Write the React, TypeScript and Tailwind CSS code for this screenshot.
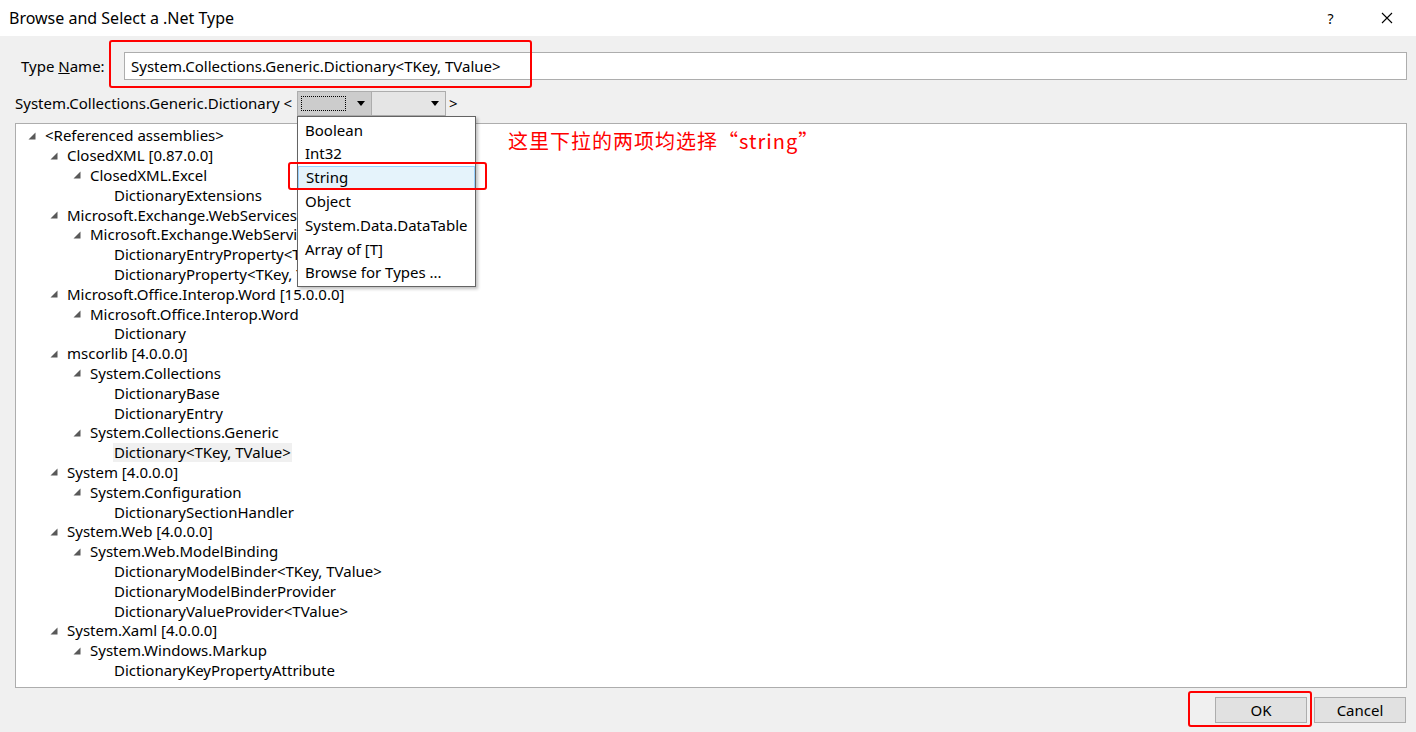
import React from 'react';

type Node = { label: string; level: number; expander?: boolean; selected?: boolean };

const tree: Node[] = [
  { label: '<Referenced assemblies>', level: 0, expander: true },
  { label: 'ClosedXML [0.87.0.0]', level: 1, expander: true },
  { label: 'ClosedXML.Excel', level: 2, expander: true },
  { label: 'DictionaryExtensions', level: 3 },
  { label: 'Microsoft.Exchange.WebServices', level: 1, expander: true },
  { label: 'Microsoft.Exchange.WebServices.Data', level: 2, expander: true },
  { label: 'DictionaryEntryProperty<TKey>', level: 3 },
  { label: 'DictionaryProperty<TKey, TEntry>', level: 3 },
  { label: 'Microsoft.Office.Interop.Word [15.0.0.0]', level: 1, expander: true },
  { label: 'Microsoft.Office.Interop.Word', level: 2, expander: true },
  { label: 'Dictionary', level: 3 },
  { label: 'mscorlib [4.0.0.0]', level: 1, expander: true },
  { label: 'System.Collections', level: 2, expander: true },
  { label: 'DictionaryBase', level: 3 },
  { label: 'DictionaryEntry', level: 3 },
  { label: 'System.Collections.Generic', level: 2, expander: true },
  { label: 'Dictionary<TKey, TValue>', level: 3, selected: true },
  { label: 'System [4.0.0.0]', level: 1, expander: true },
  { label: 'System.Configuration', level: 2, expander: true },
  { label: 'DictionarySectionHandler', level: 3 },
  { label: 'System.Web [4.0.0.0]', level: 1, expander: true },
  { label: 'System.Web.ModelBinding', level: 2, expander: true },
  { label: 'DictionaryModelBinder<TKey, TValue>', level: 3 },
  { label: 'DictionaryModelBinderProvider', level: 3 },
  { label: 'DictionaryValueProvider<TValue>', level: 3 },
  { label: 'System.Xaml [4.0.0.0]', level: 1, expander: true },
  { label: 'System.Windows.Markup', level: 2, expander: true },
  { label: 'DictionaryKeyPropertyAttribute', level: 3 },
];

const dropItems = ['Boolean', 'Int32', 'String', 'Object', 'System.Data.DataTable', 'Array of [T]', 'Browse for Types ...'];

// tree indent per level (triangle column is 16px wide)
const indent = ['pl-[12px]', 'pl-[34px]', 'pl-[57px]', 'pl-[81px]'];

function Expander() {
  return (
    <svg width="8" height="8" viewBox="0 0 8 8" className="shrink-0">
      <path d="M7.5 0.5 L7.5 7.5 L0.5 7.5 Z" fill="#595959" />
    </svg>
  );
}

function Arrow() {
  return (
    <svg width="8" height="5" viewBox="0 0 8 5">
      <path d="M0 0 H8 L4 5 Z" fill="#000" />
    </svg>
  );
}

export default function App() {
  return (
    <div
      className="relative w-[1416px] h-[732px] bg-[#f0f0f0] flex flex-col text-[15px] text-black overflow-hidden"
      style={{ fontFamily: '"Noto Sans", "Noto Sans CJK SC", sans-serif' }}
    >
      {/* Title bar */}
      <div className="h-[36px] bg-white flex items-center pl-[9px] shrink-0">
        <span className="text-[16px]">Browse and Select a .Net Type</span>
        <span className="ml-auto w-[57px] text-center text-[14px]">?</span>
        <span className="w-[57px] flex justify-center pr-[2px]">
          <svg width="12" height="12" viewBox="0 0 12 12">
            <path d="M1 1 L11 11 M11 1 L1 11" stroke="#000" strokeWidth="1.1" />
          </svg>
        </span>
      </div>

      {/* Type name row */}
      <div className="flex items-center mt-[16px] pl-[21px] pr-[9px] h-[28px]">
        <span className="w-[103px]">
          Type <span className="underline">N</span>ame:
        </span>
        <div className="flex-1 h-[28px] bg-white border border-[#adadad] flex items-center pl-[6px]">
          System.Collections.Generic.Dictionary&lt;TKey, TValue&gt;
        </div>
      </div>

      {/* Generic args row */}
      <div className="flex items-center mt-[11px] pl-[15px] h-[25px]">
        <span>System.Collections.Generic.Dictionary &lt;</span>
        <div className="ml-[5px] w-[75px] h-[25px] bg-[#cccccc] border border-[#adadad] flex items-center pl-[3px] pr-[6px]">
          <div className="w-[45px] h-[15px] border border-dotted border-black" />
          <span className="ml-auto"><Arrow /></span>
        </div>
        <div className="w-[74px] h-[25px] bg-[#e5e5e5] border border-l-0 border-[#adadad] flex items-center justify-end pr-[6px]">
          <Arrow />
        </div>
        <span className="ml-[3px]">&gt;</span>
      </div>

      {/* Tree */}
      <div className="mt-[7px] ml-[15px] mr-[9px] h-[565px] bg-white border border-[#adadad] pt-[2px] overflow-hidden">
        {tree.map((n, i) => (
          <div key={i} className={`h-[19.8px] flex items-center ${indent[n.level]}`}>
            <span className="w-[16px] flex items-center">{n.expander && <Expander />}</span>
            <span className={`leading-[19px] px-[1px] whitespace-nowrap ${n.selected ? 'bg-[#f0f0f0]' : ''}`}>{n.label}</span>
          </div>
        ))}
      </div>

      {/* Buttons */}
      <div className="flex justify-end gap-[7px] mt-[9px] pr-[10px]">
        <button className="w-[92px] h-[26px] bg-[#e1e1e1] border border-[#adadad] text-[15px]">OK</button>
        <button className="w-[92px] h-[26px] bg-[#e1e1e1] border border-[#adadad] text-[15px]">Cancel</button>
      </div>

      {/* Open dropdown list */}
      <div className="absolute left-[297px] top-[116px] w-[179px] bg-white border border-[#646464] shadow-[2px_2px_3px_rgba(0,0,0,0.25)] py-[1px]">
        {dropItems.map((d) => (
          <div
            key={d}
            className={`h-[23.8px] flex items-center pl-[7px] whitespace-nowrap ${d === 'String' ? 'bg-[#e5f3fb] border border-[#99d1ff] pl-[6px]' : ''}`}
          >
            {d}
          </div>
        ))}
      </div>

      {/* Annotations */}
      <div className="absolute left-[109px] top-[40px] w-[423px] h-[48px] border-[2.5px] border-[#ff0000] rounded-[3px]" />
      <div className="absolute left-[288px] top-[162px] w-[199px] h-[28px] border-[2.5px] border-[#ff0000] rounded-[3px]" />
      <div className="absolute left-[1188px] top-[691px] w-[124px] h-[36px] border-[2.5px] border-[#ff0000] rounded-[3px]" />
      <div
        className="absolute left-[508px] top-[127px] text-[20px] tracking-[1px] text-[#ff0000] leading-[28px] whitespace-nowrap"
        style={{ fontFamily: '"Noto Sans CJK SC", sans-serif' }}
      >
        这里下拉的两项均选择“string”
      </div>
    </div>
  );
}
